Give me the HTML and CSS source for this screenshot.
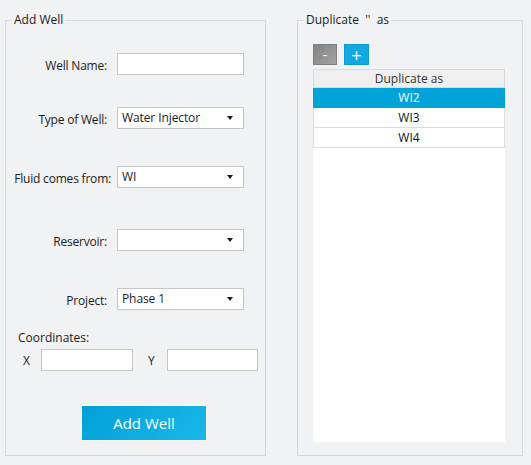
FILE: index.html
```html
<!DOCTYPE html>
<html>
<head>
<meta charset="utf-8">
<link rel="stylesheet" href="styles.css">
</head>
<body>
<div class="page">
  <fieldset class="group group-add">
    <legend>Add Well</legend>
    <div class="group-body">
      <div class="field field-name">
        <label class="field-label">Well Name:</label>
        <input class="text-input field-control" type="text">
      </div>
      <div class="field field-type">
        <label class="field-label">Type of Well:</label>
        <div class="select field-control"><span>Water Injector</span><i class="caret"></i></div>
      </div>
      <div class="field field-fluid">
        <label class="field-label">Fluid comes from:</label>
        <div class="select field-control"><span>WI</span><i class="caret"></i></div>
      </div>
      <div class="field field-res">
        <label class="field-label">Reservoir:</label>
        <div class="select field-control"><span></span><i class="caret"></i></div>
      </div>
      <div class="field field-proj">
        <label class="field-label">Project:</label>
        <div class="select field-control"><span>Phase 1</span><i class="caret"></i></div>
      </div>
      <div class="coords-title">Coordinates:</div>
      <div class="coords">
        <span class="axis axis-x">X</span>
        <input class="text-input coord-x" type="text">
        <span class="axis axis-y">Y</span>
        <input class="text-input coord-y" type="text">
      </div>
      <div class="actions">
        <button class="primary-btn" type="button">Add Well</button>
      </div>
    </div>
  </fieldset>

  <fieldset class="group group-dup">
    <legend>Duplicate &nbsp;''&nbsp; as</legend>
    <div class="group-body dup-body">
      <div class="toolbar">
        <button class="tool-btn tool-minus" type="button">-</button>
        <button class="tool-btn tool-plus" type="button">+</button>
      </div>
      <div class="table">
        <div class="table-head">Duplicate as</div>
        <div class="table-row selected">WI2</div>
        <div class="table-row">WI3</div>
        <div class="table-row">WI4</div>
      </div>
    </div>
  </fieldset>
</div>
</body>
</html>
```

FILE: styles.css
```css
* { box-sizing: border-box; }
html, body {
  margin: 0;
  padding: 0;
  background: #f1f2f4;
}
body {
  font-family: "Open Sans", "Noto Sans", sans-serif;
  font-size: 12px;
  line-height: 16px;
  color: #1b1b1b;
  width: 531px;
  height: 465px;
  overflow: hidden;
}
.page {
  display: flex;
  padding: 12px 0 0 5px;
  gap: 31px;
}
.group {
  margin: 0;
  padding: 0;
  border: 1px solid #d6d7d9;
  height: 444px;
  min-width: 0;
}
.group legend {
  margin-left: 6px;
  padding: 0 2px;
  font-size: 12px;
  line-height: 16px;
  color: #1b1b1b;
}
.group-add { width: 261px; }
.group-dup { width: 226px; }

.group-body {
  display: flex;
  flex-direction: column;
}

.field {
  display: flex;
  align-items: center;
  gap: 10px;
  height: 22px;
}
.field-name { margin-top: 25px; }
.field-type { margin-top: 32px; }
.field-fluid { margin-top: 37px; gap: 6px; }
.field-res { margin-top: 41px; }
.field-proj { margin-top: 37px; }

.field-label {
  width: 101px;
  flex: none;
  display: flex;
  justify-content: flex-end;
  white-space: nowrap;
  padding-top: 3px;
  letter-spacing: -0.2px;
}
.field-fluid .field-label { width: 105px; }
.field-control {
  width: 127px;
  height: 22px;
  flex: none;
}
.text-input {
  border: 1px solid #c6c6c6;
  background: #fff;
  margin: 0;
  padding: 0 4px;
  font: inherit;
  outline: none;
}
.select {
  display: flex;
  align-items: center;
  justify-content: space-between;
  border: 1px solid #c6c6c6;
  background: #fff;
  padding: 0 10px 0 4px;
}
.select span { white-space: nowrap; letter-spacing: -0.1px; }
.caret {
  width: 0;
  height: 0;
  border-left: 3.5px solid transparent;
  border-right: 3.5px solid transparent;
  border-top: 4px solid #1b1b1b;
}

.coords-title {
  margin: 20px 0 0 12px;
}
.coords {
  display: flex;
  align-items: center;
  margin-top: 3px;
  height: 22px;
}
.axis {
  flex: none;
  padding-top: 2px;
}
.axis-x {
  margin-left: 17px;
  width: 18px;
}
.axis-y {
  margin-left: 15px;
  width: 19px;
}
.coord-x { width: 92px; height: 22px; flex: none; }
.coord-y { width: 91px; height: 22px; flex: none; }

.actions {
  margin: 34px 0 0 75px;
}
.primary-btn {
  width: 126px;
  height: 36px;
  border: 1px solid #fff;
  background: linear-gradient(135deg, #00a0d6 0%, #1ab7e9 100%);
  color: #fff;
  font-family: inherit;
  font-size: 15px;
  padding: 0;
  cursor: pointer;
}

.dup-body {
  padding: 16px 17px 0 15px;
}
.toolbar {
  display: flex;
  gap: 7px;
  height: 21px;
}
.tool-btn {
  height: 21px;
  padding: 0;
  color: #fff;
  font-family: inherit;
  line-height: 18px;
}
.tool-minus {
  width: 24px;
  border: 1px solid #7d7d7d;
  background: linear-gradient(135deg, #838383 0%, #a3a3a3 100%);
  font-size: 14px;
}
.tool-plus {
  width: 25px;
  border: 1px solid #0c9cd6;
  background: #13a8e0;
  font-size: 18px;
}
.table {
  margin-top: 4px;
  width: 192px;
  height: 373px;
  background: #fff;
}
.table-head {
  height: 19px;
  background: #efefef;
  border: 1px solid #d9d9d9;
  text-align: center;
  color: #333;
  line-height: 17px;
}
.table-row {
  height: 20px;
  border: 1px solid #dcdcdc;
  border-top: none;
  text-align: center;
  line-height: 19px;
  color: #111;
}
.table-row.selected {
  background: #00a4d9;
  border-color: #00a4d9;
  color: #fff;
}
```
